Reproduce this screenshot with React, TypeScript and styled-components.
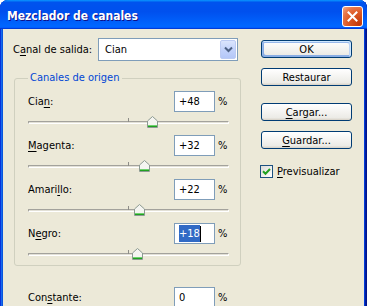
import React from "react";
import styled, { createGlobalStyle, css } from "styled-components";

const GlobalStyle = createGlobalStyle`
  html, body { margin: 0; padding: 0; background: #ffffff; overflow: hidden; }
  body {
    font-family: "DejaVu Sans Condensed", "DejaVu Sans", "Liberation Sans", sans-serif;
    font-size: 11px;
    color: #000;
  }
`;

const Window = styled.div`
  width: 367px;
  height: 330px;
  box-sizing: border-box;
  background: #ece9d8;
  border-radius: 8px 8px 0 0;
  box-shadow: inset -1px -1px #00138c, inset 1px 1px #0831d9, inset -2px -2px #001ea0,
    inset 2px 2px #166aee, inset -3px -3px #003bda, inset 3px 3px #0855dd;
  display: flex;
  flex-direction: column;
`;

const TitleBar = styled.div`
  height: 29px;
  box-sizing: border-box;
  padding: 3px 4px 0 7px;
  display: flex;
  align-items: center;
  justify-content: space-between;
  border-radius: 8px 8px 0 0;
  background: linear-gradient(180deg, #0997ff, #0053ee 8%, #0050ee 40%, #0066ff 88%, #0066ff 93%, #005bff 95%, #003dd7 96%, #003dd7);
`;

const Title = styled.span`
  font-family: "DejaVu Sans Condensed", "DejaVu Sans", sans-serif;
  font-weight: bold;
  font-size: 12px;
  color: #fff;
  text-shadow: 1px 1px #0f1089;
`;

const CloseButton = styled.div`
  width: 21px;
  height: 21px;
  box-sizing: border-box;
  border: 1px solid #fff;
  border-radius: 3px;
  background: radial-gradient(circle at 85% 90%, #c2380b 0%, #dd5a26 50%, #e8774a 75%, #f4ab8a 100%);
  display: flex;
  align-items: center;
  justify-content: center;
`;

const Body = styled.div`
  margin: 0 3px;
  padding: 9px 12px 0 10px;
  display: grid;
  grid-template-columns: 228px 91px;
  column-gap: 20px;
  align-items: start;
`;

const Main = styled.div`
  display: flex;
  flex-direction: column;
`;

const OutputRow = styled.div`
  display: flex;
  align-items: center;
  height: 23px;
  padding-right: 3px;
`;

const FieldLabel = styled.span`
  flex: 1;
  white-space: nowrap;
`;

const Key = styled.u`
  text-decoration: underline;
  text-decoration-thickness: 1px;
  text-underline-offset: 2px;
`;

const Combo = styled.div`
  width: 140px;
  height: 23px;
  box-sizing: border-box;
  border: 1px solid #7f9db9;
  background: #fff;
  display: flex;
  align-items: stretch;
  padding: 1px;
`;

const ComboText = styled.span`
  flex: 1;
  padding-left: 5px;
  display: flex;
  align-items: center;
`;

const ComboButton = styled.div`
  width: 16px;
  box-sizing: border-box;
  border: 1px solid #bccbf3;
  border-radius: 2px;
  background: linear-gradient(180deg, #dbe5fd 0%, #c3d3fb 50%, #b4c7f8 100%);
  display: flex;
  align-items: center;
  justify-content: center;
`;

const Group = styled.fieldset`
  margin: 10px 0 0 1px;
  width: 227px;
  box-sizing: border-box;
  border: 1px solid #d0d0bf;
  border-radius: 3px;
  padding: 0 0 0 13px;
  min-inline-size: auto;
`;

const Legend = styled.legend`
  padding: 0 2px;
  color: #0046d5;
  line-height: 14px;
`;

const Channels = styled.div`
  padding-top: 6px;
  display: flex;
  flex-direction: column;
`;

const ValueRow = styled.div<{ $indent?: boolean }>`
  display: grid;
  grid-template-columns: 146px 41px auto;
  align-items: center;
  height: 21px;
  ${(p) => p.$indent && css`padding-left: 15px;`}
`;

const ConstRow = styled(ValueRow)`
  margin-top: 21px;
`;

const NumBox = styled.div`
  height: 21px;
  box-sizing: border-box;
  border: 1px solid #7f9db9;
  background: #fff;
  padding-left: 4px;
  display: flex;
  align-items: center;
`;

const Selection = styled.span`
  background: #316ac5;
  color: #fff;
  line-height: 17px;
  height: 17px;
  display: inline-block;
`;

const Caret = styled.span`
  width: 1px;
  height: 16px;
  background: #000;
`;

const Pct = styled.span`
  padding-left: 3px;
`;

const SliderBlock = styled.div<{ $last?: boolean }>`
  position: relative;
  width: 201px;
  height: ${(p) => (p.$last ? 21 : 23)}px;
  box-sizing: border-box;
  padding-top: 9px;
`;

const Track = styled.div`
  height: 3px;
  box-sizing: border-box;
  border-top: 1px solid #a3a29c;
  border-bottom: 1px solid #ffffff;
  border-left: 1px solid #a3a29c;
  border-right: 1px solid #ffffff;
  background: #e2e0d6;
  border-radius: 1px;
`;

const MidTick = styled.div`
  position: absolute;
  left: 100px;
  top: 6px;
  width: 1px;
  height: 4px;
  background: #8e8d88;
`;

const Thumb = styled.div`
  position: absolute;
  top: 4px;
  width: 11px;
  height: 12px;
  line-height: 0;
`;

const Side = styled.div`
  display: flex;
  flex-direction: column;
  gap: 17px;
  padding-top: 2px;
`;

const ButtonPair = styled.div`
  display: flex;
  flex-direction: column;
  gap: 10px;
`;

const Button = styled.button<{ $default?: boolean }>`
  height: 18px;
  width: 100%;
  box-sizing: border-box;
  font: inherit;
  color: #000;
  border: 1px solid #003c74;
  border-radius: 3px;
  background: linear-gradient(180deg, #fff, #ecebe6 86%, #d6d0c5);
  padding: 0;
  ${(p) =>
    p.$default &&
    css`
      box-shadow: inset -1px 1px #cee7ff, inset 1px 2px #98b8ea, inset -2px 2px #bcd4f6,
        inset 1px -1px #89ade4, inset 2px -2px #89ade4;
    `}
`;

const CheckRow = styled.label`
  display: flex;
  align-items: center;
  gap: 4px;
  height: 13px;
  margin-top: -1px;
  margin-left: -1px;
`;

const CheckBox = styled.span`
  width: 13px;
  height: 13px;
  box-sizing: border-box;
  border: 1px solid #1c5180;
  background: linear-gradient(135deg, #dcdcd7, #ffffff);
  display: inline-flex;
  align-items: center;
  justify-content: center;
`;

const ThumbIcon = () => (
  <svg width="11" height="12" viewBox="0 0 11 12">
    <path d="M0.5 5 L5.5 0.5 L10.5 5 V11.5 H0.5 Z" fill="#f5f5f1" stroke="#8c9a92" />
    <path d="M1 9.5 H10" stroke="#6fd16f" />
    <path d="M1 10.5 H10" stroke="#21a121" />
  </svg>
);

type Channel = { label: React.ReactNode; value: number; selected?: boolean };

const channels: Channel[] = [
  { label: <>Cia<Key>n</Key>:</>, value: 48 },
  { label: <><Key>M</Key>agenta:</>, value: 32 },
  { label: <>Amari<Key>l</Key>lo:</>, value: 22 },
  { label: <>N<Key>e</Key>gro:</>, value: 18, selected: true },
];

const fmt = (v: number) => (v > 0 ? `+${v}` : `${v}`);

export default function App() {
  return (
    <>
      <GlobalStyle />
      <Window>
        <TitleBar>
          <Title>Mezclador de canales</Title>
          <CloseButton>
            <svg width="11" height="11" viewBox="0 0 11 11">
              <path d="M1.5 1.5 L9.5 9.5 M9.5 1.5 L1.5 9.5" stroke="#fff" strokeWidth="2" strokeLinecap="square" />
            </svg>
          </CloseButton>
        </TitleBar>
        <Body>
          <Main>
            <OutputRow>
              <FieldLabel>
                C<Key>a</Key>nal de salida:
              </FieldLabel>
              <Combo>
                <ComboText>Cian</ComboText>
                <ComboButton>
                  <svg width="9" height="7" viewBox="0 0 9 7">
                    <path d="M1 1.5 L4.5 5 L8 1.5" fill="none" stroke="#4d6185" strokeWidth="2" />
                  </svg>
                </ComboButton>
              </Combo>
            </OutputRow>
            <Group>
              <Legend>Canales de origen</Legend>
              <Channels>
                {channels.map((c, i) => (
                  <React.Fragment key={i}>
                    <ValueRow>
                      <span>{c.label}</span>
                      <NumBox>
                        {c.selected ? (
                          <>
                            <Selection>{fmt(c.value)}</Selection>
                            <Caret />
                          </>
                        ) : (
                          fmt(c.value)
                        )}
                      </NumBox>
                      <Pct>%</Pct>
                    </ValueRow>
                    <SliderBlock $last={i === channels.length - 1}>
                      <Track />
                      <MidTick />
                      <Thumb style={{ left: (c.value + 200) / 2 - 5 }}>
                        <ThumbIcon />
                      </Thumb>
                    </SliderBlock>
                  </React.Fragment>
                ))}
              </Channels>
            </Group>
            <ConstRow $indent>
              <span>
                Con<Key>s</Key>tante:
              </span>
              <NumBox>0</NumBox>
              <Pct>%</Pct>
            </ConstRow>
          </Main>
          <Side>
            <ButtonPair>
              <Button $default>OK</Button>
              <Button>Restaurar</Button>
            </ButtonPair>
            <ButtonPair>
              <Button>
                <Key>C</Key>argar...
              </Button>
              <Button>
                <Key>G</Key>uardar...
              </Button>
            </ButtonPair>
            <CheckRow>
              <CheckBox>
                <svg width="9" height="9" viewBox="0 0 9 9">
                  <path d="M1 4.2 L3.5 6.7 L8 2" fill="none" stroke="#21a121" strokeWidth="2" />
                </svg>
              </CheckBox>
              <span>
                <Key>P</Key>revisualizar
              </span>
            </CheckRow>
          </Side>
        </Body>
      </Window>
    </>
  );
}
